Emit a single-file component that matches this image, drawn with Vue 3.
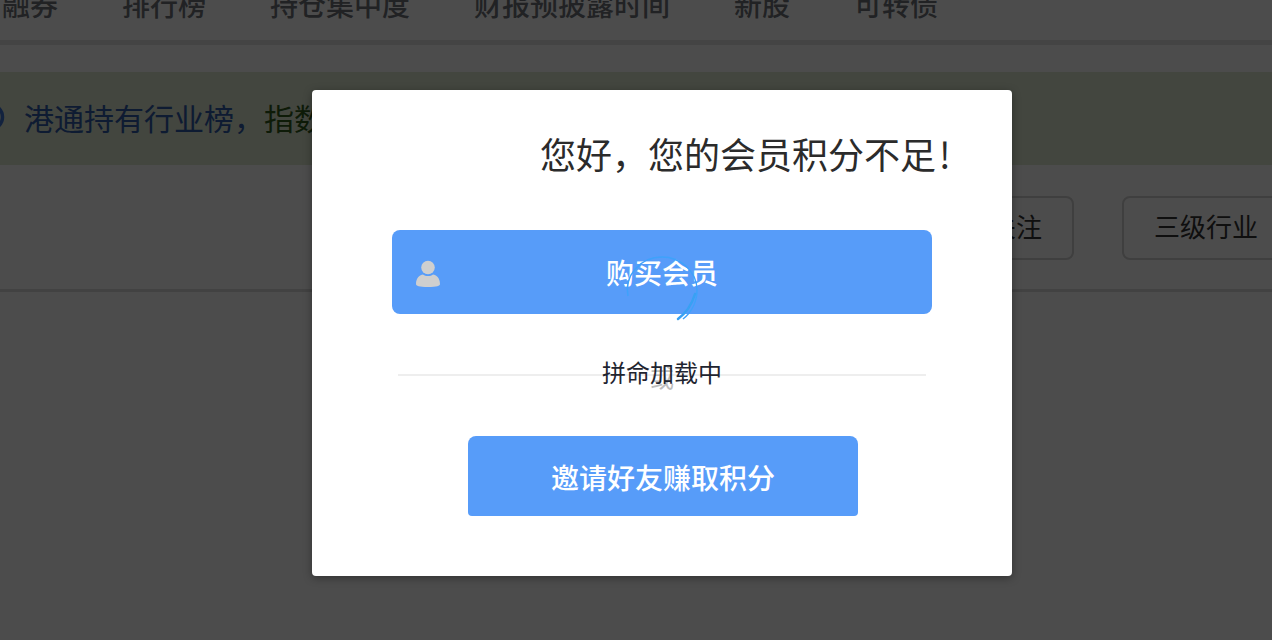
<script setup>
const tabs = ['融券', '排行榜', '持仓集中度', '财报预披露时间', '新股', '可转债']
</script>

<template>
  <div class="page">
    <nav class="tabs">
      <span v-for="t in tabs" :key="t">{{ t }}</span>
    </nav>
    <div class="alert">
      <svg class="alert-icon" width="30" height="30" viewBox="0 0 30 30">
        <circle cx="15" cy="15" r="12.5" fill="none" stroke="#3f74d0" stroke-width="3.5" />
      </svg>
      <span class="alert-lead">港通持有行业榜，</span><span class="alert-rest">指数行业持仓一览</span>
    </div>
    <div class="toolbar">
      <button class="tool">关注</button>
      <button class="tool">三级行业</button>
    </div>

    <div class="mask">
      <section class="modal">
        <h2 class="title">您好，您的会员积分不足<span class="bang">!</span></h2>
        <button class="buy">
          <svg class="user" width="24" height="28" viewBox="0 0 24 28">
            <circle cx="12" cy="7.500" r="6.800" fill="#cfcfcf" />
            <path d="M0 24c0-6 4-9.500 7-9.500 1.500 1 3 1.500 5 1.500s3.500-.5 5-1.500c3 0 7 3.500 7 9.500 0 2-3 3-12 3S0 26 0 24z" fill="#cfcfcf" />
          </svg>
          购买会员
        </button>
        <div class="divider"><span class="or">或</span></div>
        <button class="invite">邀请好友赚取积分</button>

        <div class="loading">
          <svg class="spinner" width="76" height="68" viewBox="0 0 76 68">
            <path d="M4 42C0 22 16 3 38 3c19 0 35 15 35 33 0 11-5 22-14 29" fill="none" stroke="#3ea2fb" stroke-width="1.500" />
            <path d="M54 65C62 59 68 50 71 40" fill="none" stroke="#38a1f3" stroke-width="2.500" stroke-linecap="round" />
          </svg>
          <p class="loading-text">拼命加载中</p>
        </div>
      </section>
    </div>
  </div>
</template>

<style scoped>
.page {
  position: relative;
  width: 1272px;
  height: 640px;
  overflow: hidden;
  background: #fff;
  font-family: "Noto Sans CJK SC", "Noto Sans", sans-serif;
}
.tabs {
  display: flex;
  gap: 64px;
  height: 40px;
  padding-left: 2px;
  border-bottom: 5px solid #e4e4e4;
  color: #6e7278;
  font-size: 28px;
  font-weight: 500;
  line-height: 8px;
  white-space: nowrap;
}
.alert {
  display: flex;
  align-items: center;
  box-sizing: border-box;
  height: 93px;
  margin-top: 27px;
  padding-bottom: 4px;
  background: #dfe9d4;
  font-size: 30px;
  white-space: nowrap;
}
.alert-icon { flex: none; margin: 0 19px 0 -25px; }
.alert-lead { color: #2f5aa8; }
.alert-rest { color: #2f5a1c; }
.toolbar {
  display: flex;
  justify-content: flex-end;
  gap: 48px;
  height: 93px;
  margin-top: 31px;
  margin-right: -18px;
  border-bottom: 3px solid #dcdcdc;
}
.tool {
  box-sizing: border-box;
  height: 64px;
  padding: 0 30px 4px;
  border: 2px solid #d2d2d2;
  border-radius: 8px;
  background: #fff;
  color: #333;
  font: inherit;
  font-size: 26px;
  line-height: 56px;
}
.mask {
  position: absolute;
  inset: 0;
  background: rgba(0, 0, 0, .7);
}
.modal {
  position: absolute;
  top: 90px;
  left: 312px;
  display: flex;
  flex-direction: column;
  box-sizing: border-box;
  width: 700px;
  height: 486px;
  padding-top: 38px;
  border-radius: 4px;
  background: #fff;
  box-shadow: 0 2px 8px rgba(0, 0, 0, .35);
}
.title {
  height: 50px;
  margin: 0 0 52px;
  padding-left: 228px;
  color: #2b2b2b;
  font-size: 36px;
  font-weight: 400;
  line-height: 50px;
  white-space: nowrap;
}
.bang { margin-left: 3px; }
.buy, .invite {
  padding: 0;
  border: 0;
  background: #579cf9;
  color: #fff;
  font: inherit;
  font-size: 28px;
  font-weight: 500;
}
.buy {
  position: relative;
  flex: none;
  width: 540px;
  height: 84px;
  margin-left: 80px;
  border-radius: 8px;
}
.user {
  position: absolute;
  top: 30px;
  left: 24px;
}
.divider {
  position: relative;
  flex: none;
  width: 528px;
  height: 2px;
  margin: 60px 0 0 86px;
  background: #eeeeee;
}
.or {
  position: absolute;
  top: -15px;
  left: 252px;
  color: #bdbdbd;
  font-size: 24px;
  line-height: 36px;
}
.invite {
  flex: none;
  width: 390px;
  height: 80px;
  margin: 60px 0 0 156px;
  padding-top: 2px;
  border-radius: 8px 8px 4px 4px;
}
.loading {
  position: absolute;
  top: 164px;
  left: 0;
  display: flex;
  flex-direction: column;
  align-items: center;
  width: 100%;
}
.spinner { margin-left: 0; }
.loading-text {
  margin: 33px 0 0;
  color: #1f2530;
  font-size: 24px;
  line-height: 34px;
}
</style>
